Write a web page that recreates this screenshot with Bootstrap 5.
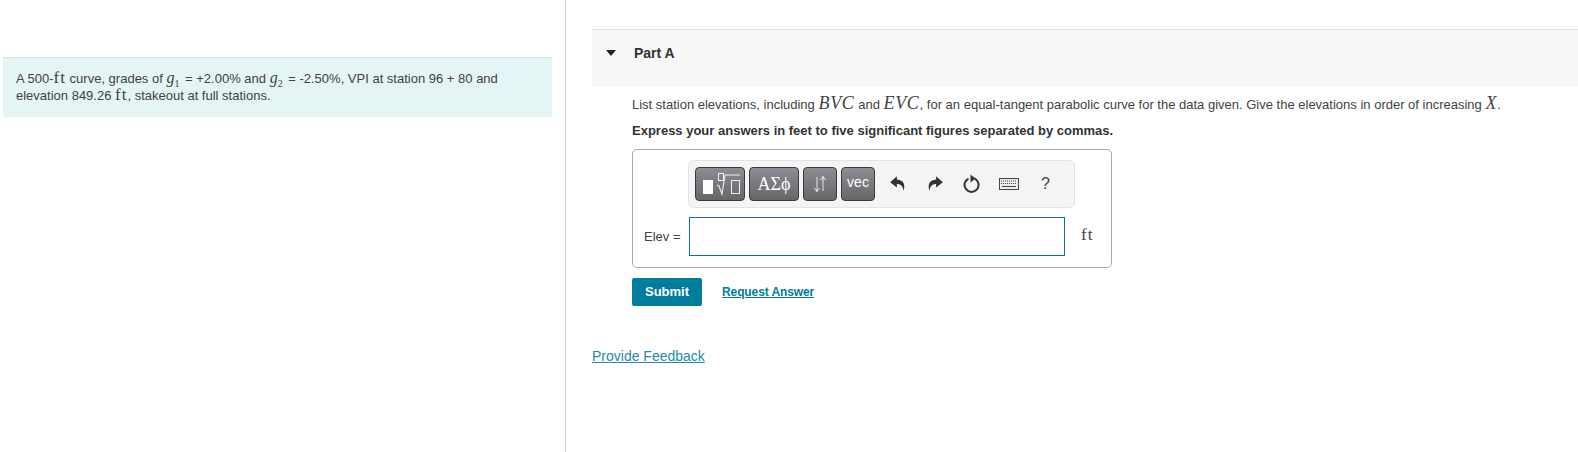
<!DOCTYPE html>
<html lang="en">

<head>
    <meta charset="UTF-8">
    <meta name="viewport" content="width=device-width, initial-scale=1.0">
    <title>Part A</title>
    <link href="https://cdn.jsdelivr.net/npm/bootstrap@5.3.3/dist/css/bootstrap.min.css" rel="stylesheet">
    <style>
        html, body { height: 100%; }
        body {
            font-family: "Liberation Sans", Arial, sans-serif;
            font-size: 13px;
            color: #424242;
            overflow: hidden;
        }

        .math { font-family: "Liberation Serif", serif; font-style: italic; font-size: 18px; line-height: 0; letter-spacing: .7px; }
        .math-g { font-size: 16px; letter-spacing: 0; margin-right: 2px; }
        .math-up { font-family: "Liberation Serif", serif; font-size: 17px; line-height: 0; letter-spacing: 1px; }
        .math sub { font-size: 10px; font-style: normal; bottom: -.35em; }

        .page-wrap { height: 452px; }
        .left-pane { width: 566px; flex: none; padding: 57px 0 0 3px; border-right: 1px solid #c5d6e4; }
        .info-box {
            width: 549px; height: 60px; padding: 12px 13px 0;
            background: #e5f5f5; border-top: 1px solid #d5e2e2;
            line-height: 17px;
        }
        .right-pane { flex: 1; padding: 29px 0 0 26px; min-width: 0; }

        .part-head {
            height: 58px; background: #f8f8f8; border-top: 1px solid #e2e2e2;
            padding: 16px 0 0 14px; font-size: 14px; font-weight: 700; line-height: 14px; color: #333;
        }
        .caret-down {
            width: 0; height: 0; margin: 4px 18px 0 0;
            border-left: 5px solid transparent; border-right: 5px solid transparent; border-top: 6px solid #222;
        }
        .part-body { padding: 8px 0 0 40px; }
        .prompt { height: 20px; line-height: 20px; margin-bottom: 8px; white-space: nowrap; }
        .prompt-bold { height: 16px; line-height: 16px; font-weight: 700; margin-bottom: 10px; color: #333; }

        .answer-box {
            width: 480px; height: 119px; border: 1px solid #aaa; border-radius: 5px;
            padding: 10px 0 0 0;
        }
        .tool-bar {
            width: 387px; height: 48px; margin-left: 55px; padding: 6px 6px 0 6px;
            background: #f4f4f4; border: 1px solid #e3e3e3; border-radius: 6px;
        }
        .tool-btn {
            height: 34px; margin-right: 4px; padding: 0;
            background: linear-gradient(#8d8c92, #66656a);
            border: 1px solid #3a3a3a; border-radius: 4px;
            color: #fff; display: flex; align-items: center; justify-content: center;
        }
        .btn-tmpl { width: 50px; }
        .btn-greek { width: 50px; font-family: "Liberation Serif", serif; font-size: 18px; }
        .btn-arrows { width: 34px; }
        .btn-vec { width: 34px; font-size: 14px; padding-bottom: 3px; }
        .tool-icon { width: 37px; height: 34px; display: flex; align-items: center; justify-content: center; flex: none; }
        .tool-help { font-size: 16px; color: #444; }

        .elev-row { margin-top: 9px; }
        .elev-label { width: 56px; padding-left: 11px; flex: none; }
        .elev-input { width: 376px; height: 39px; border: 1px solid #0f7294; border-radius: 0; outline: none; padding: 0 6px; flex: none; }
        .elev-unit { margin: 0 0 3px 16px; font-family: "Liberation Serif", serif; font-size: 17px; letter-spacing: 1px; }

        .actions { margin-top: 10px; }
        .submit-btn {
            width: 70px; height: 28px; padding: 0; border: 0; border-radius: 2px;
            background: #007c9f; color: #fff; font-size: 13px; font-weight: 700;
        }
        .submit-btn:hover { background: #006a88; color: #fff; }
        .answer-link { margin-left: 20px; font-size: 12px; letter-spacing: -.1px; font-weight: 700; color: #007c9f; }
        .feedback-link { display: inline-block; margin-top: 42px; font-size: 14px; color: #2389ab; line-height: 17px; }
    </style>
</head>

<body>
    <div class="d-flex page-wrap">
        <div class="left-pane">
            <div class="info-box">
                A 500-<span class="math-up">ft</span> curve, grades of <span class="math math-g">g<sub>1</sub></span> = +2.00% and <span class="math math-g">g<sub>2</sub></span> = -2.50%, VPI at station 96 + 80 and<br>
                elevation 849.26 <span class="math-up">ft</span>, stakeout at full stations.
            </div>
        </div>

        <div class="right-pane">
            <div class="part-head d-flex align-items-start">
                <span class="caret-down"></span>
                <span>Part A</span>
            </div>

            <div class="part-body">
                <div class="prompt">List station elevations, including <span class="math">BVC</span> and <span class="math">EVC</span>, for an equal-tangent parabolic curve for the data given. Give the elevations in order of increasing <span class="math">X</span>.</div>
                <div class="prompt-bold">Express your answers in feet to five significant figures separated by commas.</div>

                <div class="answer-box">
                    <div class="tool-bar d-flex">
                        <button class="tool-btn btn-tmpl" type="button" aria-label="Templates">
                            <svg width="44" height="30" viewBox="0 0 44 30">
                                <rect x="5" y="11" width="10" height="14" fill="#fff"/>
                                <rect x="20.500" y="4.500" width="5" height="7" fill="none" stroke="#f0f0f0"/>
                                <path d="M19 16l2 1 3 8 3-19h15" fill="none" stroke="#f0f0f0" stroke-width="1.100"/>
                                <rect x="33.500" y="11.500" width="8" height="13" fill="none" stroke="#f0f0f0"/>
                            </svg>
                        </button>
                        <button class="tool-btn btn-greek" type="button">ΑΣϕ</button>
                        <button class="tool-btn btn-arrows" type="button" aria-label="Arrows">
                            <svg width="18" height="20" viewBox="0 0 18 20">
                                <path d="M6 3v14M3.500 14l2.500 3.500L8.500 14M12 17V3M9.500 6 12 2.500 14.500 6" fill="none" stroke="#dcdcdc" stroke-width="1.100"/>
                            </svg>
                        </button>
                        <button class="tool-btn btn-vec" type="button">vec</button>

                        <span class="tool-icon">
                            <svg width="18" height="18" viewBox="0 0 16 16"><path d="M7 1 1 6.500 7 11V8c3 0 5 1 6 6 1.500-5 .5-9.500-6-10z" fill="#333"/></svg>
                        </span>
                        <span class="tool-icon">
                            <svg width="18" height="18" viewBox="0 0 16 16"><path d="M9 1l6 5.500L9 11V8c-3 0-5 1-6 6-1.500-5-.5-9.500 6-10z" fill="#333"/></svg>
                        </span>
                        <span class="tool-icon">
                            <svg width="18" height="20" viewBox="0 0 18 20"><path d="M11.800 4.700A7 7 0 1 1 5.500 4.600" fill="none" stroke="#333" stroke-width="2"/><path d="M7.500 .5v8l5-4z" fill="#333"/></svg>
                        </span>
                        <span class="tool-icon">
                            <svg width="20" height="12" viewBox="0 0 20 12"><rect x=".5" y=".5" width="19" height="11" fill="#eee" stroke="#444"/><path d="M2 3h16M2 5.500h16" stroke="#444" stroke-dasharray="1 1"/><path d="M3 8.500h14" stroke="#444"/></svg>
                        </span>
                        <span class="tool-icon tool-help">?</span>
                    </div>

                    <div class="elev-row d-flex align-items-center">
                        <span class="elev-label">Elev =</span>
                        <input class="elev-input" type="text" aria-label="Elev">
                        <span class="elev-unit">ft</span>
                    </div>
                </div>

                <div class="actions d-flex align-items-center">
                    <button class="btn submit-btn" type="button">Submit</button>
                    <a class="answer-link" href="#">Request Answer</a>
                </div>
            </div>

            <a class="feedback-link" href="#">Provide Feedback</a>
        </div>
    </div>

    <script src="https://cdn.jsdelivr.net/npm/bootstrap@5.3.3/dist/js/bootstrap.bundle.min.js"></script>
</body>

</html>
